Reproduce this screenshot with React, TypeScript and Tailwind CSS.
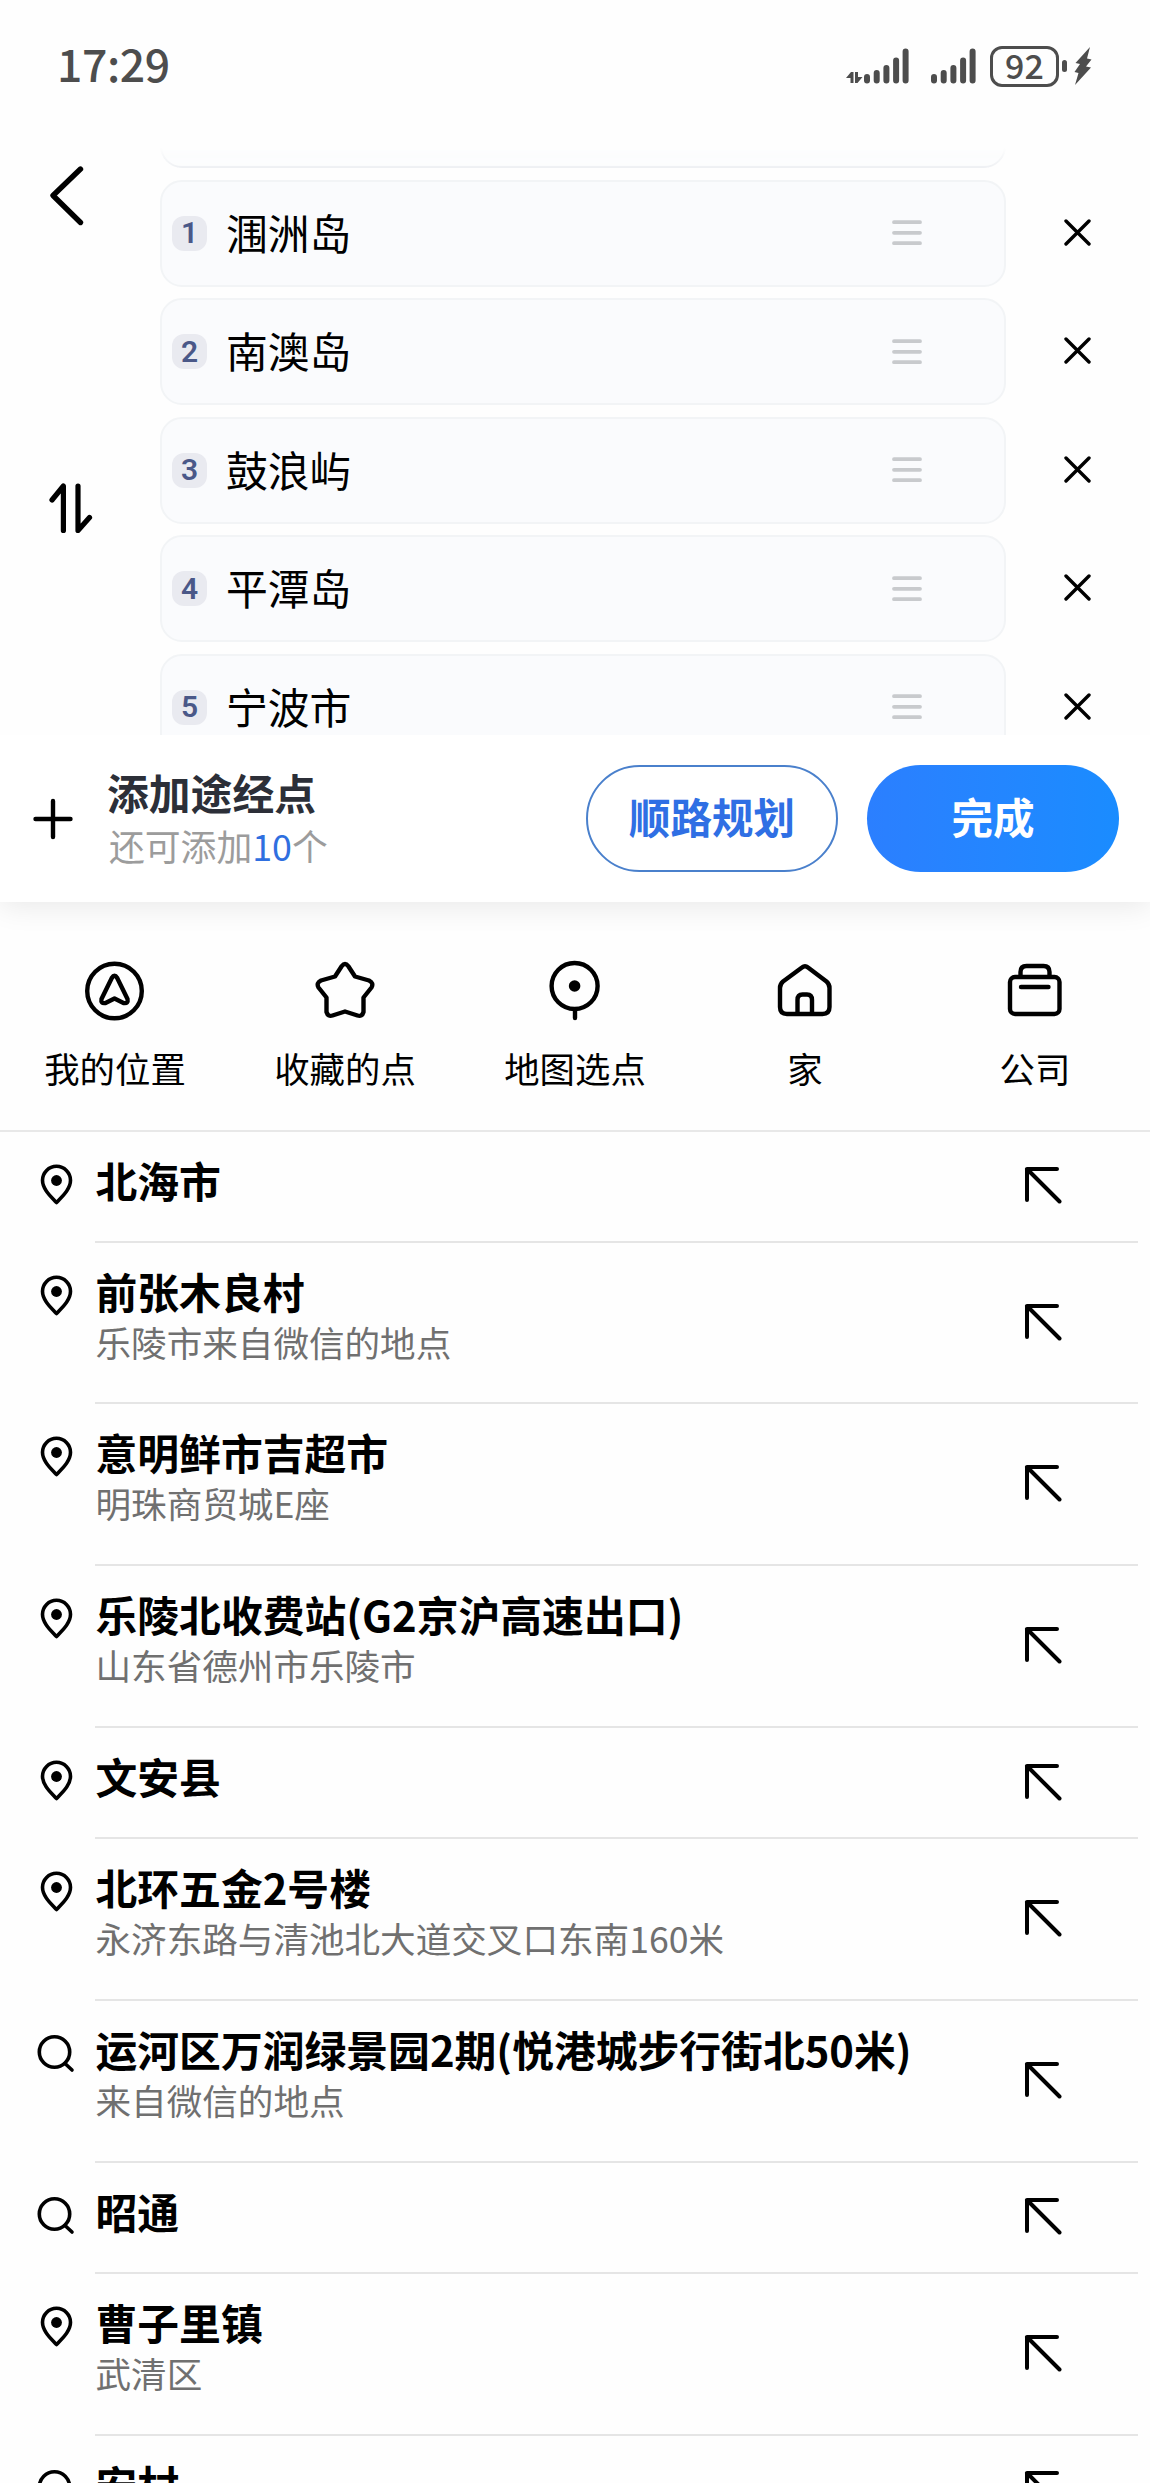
import type { ReactNode } from 'react';

type Place = {
    icon: 'pin' | 'search';
    title: string;
    address?: string;
};

const waypoints = ['涠洲岛', '南澳岛', '鼓浪屿', '平潭岛', '宁波市'];

const places: Place[] = [
    { icon: 'pin', title: '北海市' },
    { icon: 'pin', title: '前张木良村', address: '乐陵市来自微信的地点' },
    { icon: 'pin', title: '意明鲜市吉超市', address: '明珠商贸城E座' },
    { icon: 'pin', title: '乐陵北收费站(G2京沪高速出口)', address: '山东省德州市乐陵市' },
    { icon: 'pin', title: '文安县' },
    { icon: 'pin', title: '北环五金2号楼', address: '永济东路与清池北大道交叉口东南160米' },
    { icon: 'search', title: '运河区万润绿景园2期(悦港城步行街北50米)', address: '来自微信的地点' },
    { icon: 'search', title: '昭通' },
    { icon: 'pin', title: '曹子里镇', address: '武清区' },
    { icon: 'search', title: '安村' },
];

function SignalBars() {
    return (
        <svg width="46" height="40" viewBox="0 0 46 40" stroke="#4d4d4d" strokeWidth="6" strokeLinecap="round">
            <path d="M3 31V34.5M12.7 27V34.5M22.4 22V34.5M32.1 14.5V34.5M41.6 5.5V34.5" />
        </svg>
    );
}

function StatusBar() {
    return (
        <div className="flex h-[134px] shrink-0 items-center justify-between pr-[58px] pb-[2px] pl-[57px]">
            <span className="pb-[5px] text-[44.5px] leading-none font-medium tracking-[-0.4px] text-[#4d4d4d]">17:29</span>
            <div className="flex items-center">
                <svg width="18" height="40" viewBox="0 0 18 40" fill="#4d4d4d">
                    <path d="M0 32L5 26H7.5V37H4.5V32ZM9 26H12V31H16.5L11.5 37H9Z" />
                </svg>
                <div className="flex gap-[21px]">
                    <SignalBars />
                    <SignalBars />
                </div>
                {/* Battery */}
                <div className="ml-[13px] flex h-[41px] w-[69px] items-center justify-center rounded-[12px] border-3 border-[#4d4d4d] pb-[3px] text-[34px] leading-none font-medium text-[#4d4d4d]">
                    92
                </div>
                <div className="ml-[3px] h-[12px] w-[5px] rounded-full bg-[#4d4d4d]" />
                <svg className="ml-[7px]" width="18" height="38" viewBox="0 0 18 38" fill="#4d4d4d">
                    <path d="M16 0L1.5 16L6 17L0.5 25L4.5 26L1 38L17 20.5L12 19.5L17.5 12.5L13 11.5Z" />
                </svg>
            </div>
        </div>
    );
}

function WaypointRow({ index, name }: { index: number; name: string }) {
    return (
        <div className="flex h-[106.8px] shrink-0 items-center">
            <div className="flex h-full w-[846px] items-center rounded-[22px] border-2 border-[#f2f4f6] bg-[#fafbfd] pr-[82px] pl-[10px]">
                <span className="flex h-[35px] w-[35px] items-center justify-center rounded-[12px] bg-[#e9eaf0] font-[Roboto,sans-serif] text-[30px] leading-none font-semibold text-[#4a5888]">
                    {index}
                </span>
                <span className="ml-[19px] flex-1 pb-[1px] text-[41.8px] leading-none">{name}</span>
                <svg width="30" height="26" viewBox="0 0 30 26" stroke="#c8cacd" strokeWidth="3.8" strokeLinecap="round">
                    <path d="M2 2.2H28M2 12.8H28M2 23.2H28" />
                </svg>
            </div>
            <svg className="mb-[2px] ml-[58px]" width="27" height="27" viewBox="0 0 27 27" stroke="#000" strokeWidth="3.4" strokeLinecap="round">
                <path d="M2 2L25 25M25 2L2 25" />
            </svg>
        </div>
    );
}

function Shortcut({ label, children }: { label: string; children: ReactNode }) {
    return (
        <div className="flex flex-col items-center">
            <svg width="64" height="64" viewBox="0 0 64 64" fill="none" stroke="#000" strokeWidth="4.4" strokeLinecap="round" strokeLinejoin="round">
                {children}
            </svg>
            <span className="mt-[25px] text-[35.4px] leading-[40px]">{label}</span>
        </div>
    );
}

function PinIcon() {
    return (
        <svg width="40" height="44" viewBox="0 0 40 44" fill="none" stroke="#000" strokeWidth="3.6" strokeLinejoin="round">
            <path d="M20.5 39.5C15.5 34 6.5 26.5 6.5 17.3A14 14 0 0 1 34.5 17.3C34.5 26.5 25.5 34 20.5 39.5Z" />
            <circle cx="20.5" cy="17.5" r="5.4" fill="#000" stroke="none" />
        </svg>
    );
}

function SearchIcon() {
    return (
        <svg width="40" height="44" viewBox="0 0 40 44" fill="none" stroke="#000" strokeWidth="3.6" strokeLinecap="round">
            <circle cx="18.5" cy="20" r="15.2" />
            <path d="M29 31.5L36 38" />
        </svg>
    );
}

function PlaceRow({ place }: { place: Place }) {
    return (
        <div className={`flex shrink-0 ${place.address ? 'h-[161.7px]' : 'h-[111.3px]'}`}>
            <div className="w-[95px] pt-[31px] pl-[36px]">
                {place.icon === 'pin' ? <PinIcon /> : <SearchIcon />}
            </div>
            <div className="mr-[12px] flex flex-1 items-center justify-between border-b-2 border-[#e5e5e5] pr-[76px]">
                <div className="self-stretch pt-[24px] pl-[0.5px] whitespace-nowrap">
                    <p className="text-[41.8px] leading-[48px] font-bold">{place.title}</p>
                    {place.address && (
                        <p className="mt-[6px] text-[35.6px] leading-[42px] text-[#707070]">{place.address}</p>
                    )}
                </div>
                <svg className="mb-[2px]" width="38" height="38" viewBox="0 0 38 38" fill="none" stroke="#000" strokeWidth="4" strokeLinecap="round" strokeLinejoin="round">
                    <path d="M33 3H3V34M3 3L35.5 35.5" />
                </svg>
            </div>
        </div>
    );
}

export default function App() {
    return (
        <div className="flex h-[2483px] w-[1150px] flex-col overflow-hidden bg-[#fefefe] font-['Noto_Sans_CJK_SC',sans-serif] text-black">
            <StatusBar />

            {/* Route editor */}
            <div className="flex h-[601px] shrink-0 overflow-hidden">
                <div className="w-[160px] shrink-0 pt-[31px] pl-[48px]">
                    <svg width="38" height="62" viewBox="0 0 38 62" fill="none" stroke="#000" strokeWidth="5.4" strokeLinecap="round" strokeLinejoin="round">
                        <path d="M32.5 4L5 30.5L32.5 57.5" />
                    </svg>
                    <svg className="mt-[255px]" width="46" height="54" viewBox="0 0 46 54" fill="none" stroke="#000" strokeWidth="5.2" strokeLinecap="round" strokeLinejoin="round">
                        <path d="M4 18L15.4 4V48.5M30 4V48.5L41.5 35.5" />
                    </svg>
                </div>
                <div className="flex flex-1 flex-col gap-[11.7px]">
                    {/* Tail of the start point card, scrolled out under the header */}
                    <div className="flex h-[34.3px] w-[846px] shrink-0 flex-col justify-end overflow-hidden mask-t-from-0% mask-t-to-60%">
                        <div className="h-[107px] shrink-0 rounded-[22px] border-2 border-[#eef0f3] bg-[#fbfcfd]" />
                    </div>
                    {waypoints.map((name, i) => (
                        <WaypointRow key={name} index={i + 1} name={name} />
                    ))}
                </div>
            </div>

            {/* Action bar */}
            <div className="z-10 flex h-[167px] shrink-0 items-center bg-white pr-[31px] pl-[32px] shadow-[0_4px_28px_rgba(0,0,0,0.09)] [clip-path:inset(0_0_-40px_0)]">
                <svg width="42" height="42" viewBox="0 0 42 42" stroke="#000" strokeWidth="4.4" strokeLinecap="round">
                    <path d="M21 3V39M3.5 21H38.5" />
                </svg>
                <div className="ml-[33px] flex-1 pb-[3px]">
                    <p className="text-[41.8px] leading-[48px] font-bold text-[#2c2f38]">添加途经点</p>
                    <p className="mt-[8px] ml-[2px] text-[35.8px] leading-[42px] text-[#9c9c9c]">
                        还可添加<span className="text-[#2f6fe0]">10</span>个
                    </p>
                </div>
                <button className="h-[107px] w-[252px] rounded-full border-2 border-[#4a80cc] pb-[4px] text-[41.5px] leading-none font-bold text-[#2f6fe4]">
                    顺路规划
                </button>
                <button className="ml-[29px] h-[107px] w-[252px] rounded-full bg-linear-to-r from-[#2b7fff] to-[#1a8cff] pb-[4px] text-[41.5px] leading-none font-bold text-white">
                    完成
                </button>
            </div>

            {/* Shortcuts */}
            <div className="grid h-[229.5px] shrink-0 grid-cols-5 border-b-2 border-[#e8e8e8] pt-[57px]">
                <Shortcut label="我的位置">
                    <circle cx="31.5" cy="32" r="27.3" />
                    <path d="M28.8 19Q31.5 14.5 34.2 19L44.5 40Q45.5 45 40.5 44L31.5 39.5L22.5 44Q17.5 45 18.5 40Z" />
                </Shortcut>
                <Shortcut label="收藏的点">
                    <path d="M28.8 7Q32 3 35.2 7L42 17.5L56 21.5Q61 24 58.5 28.5L50.5 38.5L50.5 53Q49 58 44.5 56.5L32 52.5L19.5 56.5Q15 58 13.5 53L13.5 38.5L5.5 28.5Q3 24 8 21.5L22 17.5Z" />
                </Shortcut>
                <Shortcut label="地图选点">
                    <circle cx="31.6" cy="27" r="23" />
                    <circle cx="31.6" cy="27" r="5.8" fill="#000" stroke="none" />
                    <path d="M32 51V59" />
                </Shortcut>
                <Shortcut label="家">
                    <path d="M29 8.5Q32 6 35 8.5L53.5 22.5Q56.5 25 56.5 29V48Q56.5 55 49.5 55H14Q7 55 7 48V29Q7 25 10 22.5Z" />
                    <path d="M24.5 54V41Q24.5 35.5 29.5 35.5H34Q39 35.5 39 41V54" />
                </Shortcut>
                <Shortcut label="公司">
                    <rect x="7" y="18" width="49.5" height="37" rx="5" />
                    <path d="M17.5 17V13Q17.5 7 23.5 7H40.5Q46.5 7 46.5 13V17" />
                    <path d="M18 28H45.5" />
                </Shortcut>
            </div>

            {/* Search history */}
            <div className="flex flex-col">
                {places.map((place) => (
                    <PlaceRow key={place.title} place={place} />
                ))}
            </div>
        </div>
    );
}
